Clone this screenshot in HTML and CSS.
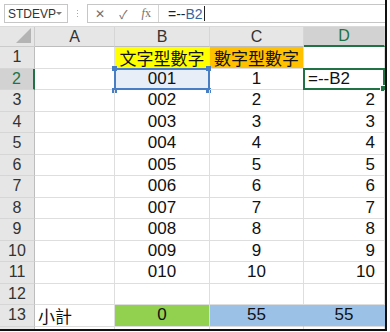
FILE: index.html
```html
<!DOCTYPE html>
<html lang="zh-Hant">
<head>
  <meta charset="UTF-8">
  <meta name="viewport" content="width=device-width, initial-scale=1.0">
  <title>STDEVP</title>
  <link rel="stylesheet" href="styles.css">
</head>
<body>
  <div class="window">
    <!-- Formula bar -->
    <div class="formula-bar">
      <div class="name-box">
        <span>STDEVP</span>
        <span class="arrow"></span>
      </div>
      <div class="grip"><i></i><i></i><i></i></div>
      <div class="formula-box">
        <div class="fx-buttons">
          <span class="fx-btn">✕</span>
          <span class="fx-btn">✓</span>
          <span class="fx-btn fx"><i>f</i>x</span>
        </div>
        <div class="formula-input">=--<span class="ref">B2</span><span class="caret"></span></div>
      </div>
    </div>

    <!-- Sheet -->
    <div class="sheet">
      <div class="hdr corner"></div>
      <div class="hdr col">A</div>
      <div class="hdr col">B</div>
      <div class="hdr col">C</div>
      <div class="hdr col active">D</div>

      <div class="hdr row">1</div>
      <div class="cell"></div>
      <div class="cell center yellow">文字型數字</div>
      <div class="cell center orange">數字型數字</div>
      <div class="cell"></div>

      <div class="hdr row active">2</div>
      <div class="cell"></div>
      <div class="cell center ref-range">001</div>
      <div class="cell center">1</div>
      <div class="cell editing">=--B2</div>

      <div class="hdr row">3</div>
      <div class="cell"></div>
      <div class="cell center">002</div>
      <div class="cell center">2</div>
      <div class="cell right">2</div>

      <div class="hdr row">4</div>
      <div class="cell"></div>
      <div class="cell center">003</div>
      <div class="cell center">3</div>
      <div class="cell right">3</div>

      <div class="hdr row">5</div>
      <div class="cell"></div>
      <div class="cell center">004</div>
      <div class="cell center">4</div>
      <div class="cell right">4</div>

      <div class="hdr row">6</div>
      <div class="cell"></div>
      <div class="cell center">005</div>
      <div class="cell center">5</div>
      <div class="cell right">5</div>

      <div class="hdr row">7</div>
      <div class="cell"></div>
      <div class="cell center">006</div>
      <div class="cell center">6</div>
      <div class="cell right">6</div>

      <div class="hdr row">8</div>
      <div class="cell"></div>
      <div class="cell center">007</div>
      <div class="cell center">7</div>
      <div class="cell right">7</div>

      <div class="hdr row">9</div>
      <div class="cell"></div>
      <div class="cell center">008</div>
      <div class="cell center">8</div>
      <div class="cell right">8</div>

      <div class="hdr row">10</div>
      <div class="cell"></div>
      <div class="cell center">009</div>
      <div class="cell center">9</div>
      <div class="cell right">9</div>

      <div class="hdr row">11</div>
      <div class="cell"></div>
      <div class="cell center">010</div>
      <div class="cell center">10</div>
      <div class="cell right">10</div>

      <div class="hdr row">12</div>
      <div class="cell"></div>
      <div class="cell"></div>
      <div class="cell"></div>
      <div class="cell"></div>

      <div class="hdr row">13</div>
      <div class="cell">小計</div>
      <div class="cell center green">0</div>
      <div class="cell center blue">55</div>
      <div class="cell center blue">55</div>

      <div class="hdr row"></div>
      <div class="cell"></div>
      <div class="cell"></div>
      <div class="cell"></div>
      <div class="cell"></div>
    </div>
  </div>
</body>
</html>
```

FILE: styles.css
```css
/* General styles */
body {
  margin: 0;
  padding: 0;
  background-color: white;
  font-family: "Liberation Sans", "Noto Sans CJK TC", sans-serif;
}
.window {
  width: 385px;
  height: 329px;
  overflow: hidden;
  border-right: 2px solid #111;
  border-bottom: 2px solid #111;
  background-color: white;
}

/* Formula bar */
.formula-bar {
  height: 27px;
  box-sizing: border-box;
  display: flex;
  align-items: flex-start;
  padding-top: 4px;
  padding-left: 4px;
  border-bottom: 1px solid #dadada;
  background-color: #fff;
}
.name-box {
  width: 64px;
  height: 19px;
  box-sizing: border-box;
  border: 1px solid #c6c6c6;
  display: flex;
  align-items: center;
  justify-content: space-between;
  padding: 0 5px 0 3px;
  font-size: 12px;
  color: #333;
}
.arrow {
  width: 0;
  height: 0;
  border-left: 3px solid transparent;
  border-right: 3px solid transparent;
  border-top: 3px solid #777;
}
.grip {
  width: 19px;
  height: 19px;
  display: flex;
  flex-direction: column;
  align-items: center;
  justify-content: center;
  gap: 2px;
}
.grip i {
  width: 1px;
  height: 1px;
  background-color: #aaa;
}
.formula-box {
  flex: 1;
  height: 19px;
  box-sizing: border-box;
  border: 1px solid #c6c6c6;
  border-right: none;
  display: flex;
}
.fx-buttons {
  width: 70px;
  display: flex;
  align-items: center;
  justify-content: space-around;
  border-right: 1px solid #d4d4d4;
  color: #707070;
  font-size: 12px;
}
.fx-btn.fx {
  font-family: "Liberation Serif", serif;
  font-size: 12px;
}
.formula-input {
  display: flex;
  align-items: center;
  padding-left: 9px;
  font-size: 14px;
  color: #222;
}
.ref {
  color: #3465a4;
}
.caret {
  width: 1px;
  height: 15px;
  margin-left: 1px;
  background-color: #222;
}

/* Sheet */
.sheet {
  display: grid;
  grid-template-columns: 35px 80px 95px 94px 81px;
  grid-template-rows: 20px repeat(13, 21.5px) 10px;
}
.hdr {
  box-sizing: border-box;
  background-color: #e6e6e6;
  color: #333;
  font-size: 16px;
  display: flex;
  align-items: center;
  justify-content: center;
  border-right: 1px solid #cbcbcb;
  border-bottom: 1px solid #cbcbcb;
}
.hdr.col {
  border-right-color: #d6d6d6;
  border-bottom-color: #bdbdbd;
}
.hdr.row {
  border-bottom-color: #d6d6d6;
  border-right-color: #bdbdbd;
}
.hdr.active {
  background-color: #d2d2d2;
  color: #217346;
}
.hdr.col.active {
  border-bottom: 2px solid #217346;
}
.hdr.row.active {
  border-right: 2px solid #217346;
}
.corner {
  position: relative;
}
.corner::after {
  content: "";
  position: absolute;
  right: 3px;
  bottom: 3px;
  width: 15px;
  height: 15px;
  background-color: #b4b4b4;
  clip-path: polygon(100% 0, 100% 100%, 0 100%);
}
.cell {
  box-sizing: border-box;
  border-right: 1px solid #dedede;
  border-bottom: 1px solid #dedede;
  font-size: 17px;
  color: #111;
  display: flex;
  align-items: center;
  padding: 0 3px;
  white-space: nowrap;
  position: relative;
}
.center {
  justify-content: center;
}
.right {
  justify-content: flex-end;
  padding-right: 9px;
}
.yellow {
  background-color: #ffff00;
}
.orange {
  background-color: #ffc000;
}
.green {
  background-color: #92d050;
}
.blue {
  background-color: #9bc2e6;
  border-right-color: #9bc2e6;
}

/* Referenced range and active cell */
.ref-range {
  background-color: #e8eef8;
  border: 2px solid #4a7ec4;
  margin: -1px 0 0 -1px;
}
.ref-range::before {
  content: "";
  position: absolute;
  left: -4px;
  top: -4px;
  width: 5px;
  height: 5px;
  background-color: #4a7ec4;
  box-shadow: 0 22px 0 #4a7ec4, 94px 0 0 #4a7ec4, 94px 22px 0 #4a7ec4;
}
.editing {
  border: 2px solid #217346;
  margin: -1px 0 0 -1px;
  padding-left: 3px;
}
.editing::after {
  content: "";
  position: absolute;
  right: -4px;
  bottom: -4px;
  width: 5px;
  height: 5px;
  background-color: #217346;
  border: 1px solid white;
}
```
